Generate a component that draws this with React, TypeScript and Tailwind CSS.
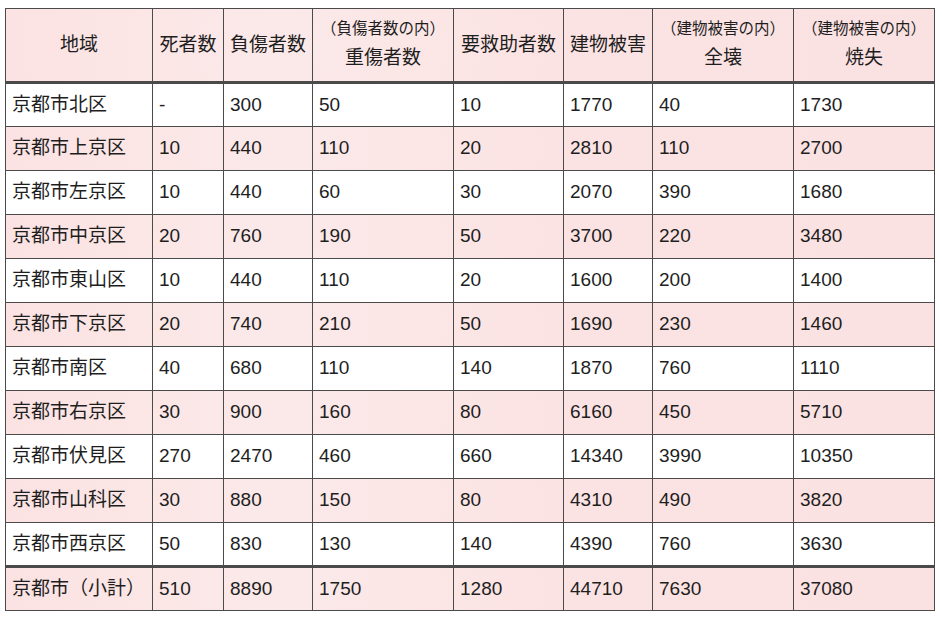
import React from "react";

const rows: string[][] = [
  ["京都市北区", "-", "300", "50", "10", "1770", "40", "1730"],
  ["京都市上京区", "10", "440", "110", "20", "2810", "110", "2700"],
  ["京都市左京区", "10", "440", "60", "30", "2070", "390", "1680"],
  ["京都市中京区", "20", "760", "190", "50", "3700", "220", "3480"],
  ["京都市東山区", "10", "440", "110", "20", "1600", "200", "1400"],
  ["京都市下京区", "20", "740", "210", "50", "1690", "230", "1460"],
  ["京都市南区", "40", "680", "110", "140", "1870", "760", "1110"],
  ["京都市右京区", "30", "900", "160", "80", "6160", "450", "5710"],
  ["京都市伏見区", "270", "2470", "460", "660", "14340", "3990", "10350"],
  ["京都市山科区", "30", "880", "150", "80", "4310", "490", "3820"],
  ["京都市西京区", "50", "830", "130", "140", "4390", "760", "3630"],
];
const total = ["京都市（小計）", "510", "8890", "1750", "1280", "44710", "7630", "37080"];

const widths = [147, 71, 89, 141, 110, 89, 141, 141];

const pinkBg =
  "bg-[#fce4e4] bg-[radial-gradient(circle_at_30%_50%,#fbe9e9_0%,#fce3e3_40%,#fbe2e2_100%)]";

function Head({ small, big }: { small?: string; big: string }) {
  return (
    <th className="border border-[#4a4a4a] border-b-[3px] font-normal text-center align-middle px-1">
      {small ? (
        <div className="flex flex-col items-center leading-none">
          <span className="text-[15.5px] leading-[26px] whitespace-nowrap">{small}</span>
          <span className="text-[19px] leading-[32px]">{big}</span>
        </div>
      ) : (
        <span className="text-[19px]">{big}</span>
      )}
    </th>
  );
}

export default function App() {
  return (
    <div className="w-[942px] h-[618px] bg-white pt-[8px] pl-[5px]">
      <table
        className="table-fixed border-collapse text-[#1e1e1e] text-[19px]"
        style={{ width: 930, fontFamily: '"Liberation Sans", "Noto Sans CJK JP", sans-serif' }}
      >
        <colgroup>
          {widths.map((w, i) => (
            <col key={i} style={{ width: w }} />
          ))}
        </colgroup>
        <thead>
          <tr className={`h-[74px] ${pinkBg}`}>
            <Head big="地域" />
            <Head big="死者数" />
            <Head big="負傷者数" />
            <Head small="（負傷者数の内）" big="重傷者数" />
            <Head big="要救助者数" />
            <Head big="建物被害" />
            <Head small="（建物被害の内）" big="全壊" />
            <Head small="（建物被害の内）" big="焼失" />
          </tr>
        </thead>
        <tbody>
          {rows.map((r, i) => (
            <tr key={i} className={`h-[44px] ${i % 2 === 1 ? pinkBg : "bg-white"}`}>
              {r.map((c, j) => (
                <td
                  key={j}
                  className={`border border-[#4a4a4a] px-[6px] align-middle whitespace-nowrap ${
                    i === rows.length - 1 ? "border-b-[3px]" : ""
                  }`}
                >
                  {c}
                </td>
              ))}
            </tr>
          ))}
          <tr className={`h-[44px] ${pinkBg}`}>
            {total.map((c, j) => (
              <td
                key={j}
                className="border border-[#4a4a4a] border-t-[3px] px-[6px] align-middle whitespace-nowrap"
              >
                {c}
              </td>
            ))}
          </tr>
        </tbody>
      </table>
    </div>
  );
}
